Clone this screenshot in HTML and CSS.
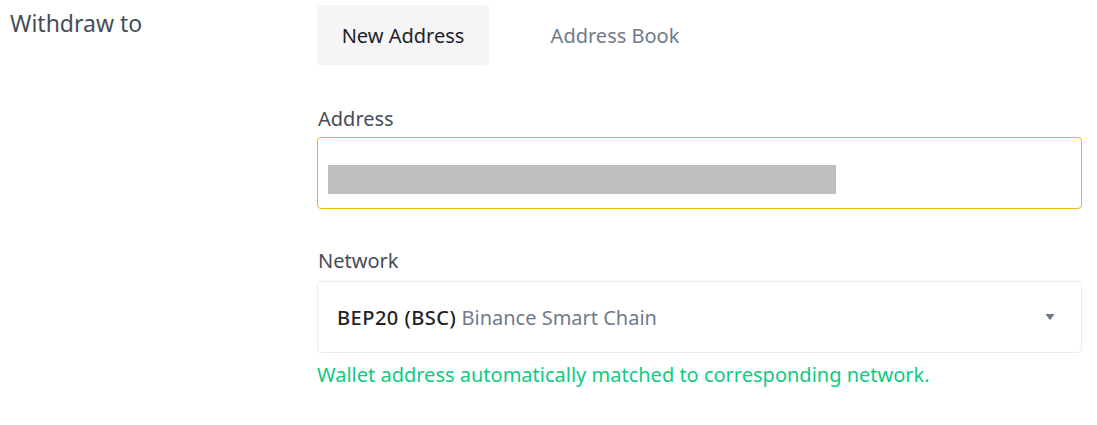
FILE: index.html
```html
<!DOCTYPE html>
<html>
<head>
<meta charset="utf-8">
<link rel="stylesheet" href="styles.css">
</head>
<body>
<div class="row">
  <div class="label-col">Withdraw to</div>
  <div class="content-col">
    <div class="tabs">
      <div class="tab active">New Address</div>
      <div class="tab">Address Book</div>
    </div>
    <div class="field first">
      <div class="field-label">Address</div>
      <div class="input focus">
        <div class="redacted"></div>
      </div>
    </div>
    <div class="field">
      <div class="field-label">Network</div>
      <div class="input select">
        <div class="select-value"><span class="net-code">BEP20 (BSC)</span> <span class="net-name">Binance Smart Chain</span></div>
        <svg class="caret" width="10" height="6" viewBox="0 0 10 6"><path d="M0.5 0H9.5L5.6 5.4Q5 6 4.4 5.4Z" fill="#707a8a"/></svg>
      </div>
      <div class="hint">Wallet address automatically matched to corresponding network.</div>
    </div>
  </div>
</div>
</body>
</html>
```
FILE: styles.css
```css
* { box-sizing: border-box; }
body {
  margin: 0;
  background: #fff;
  font-family: "Noto Sans", "Open Sans", sans-serif;
  font-size: 20px;
  color: #1e2329;
}
.row {
  display: flex;
  padding-top: 5px;
}
.label-col {
  width: 317px;
  padding-left: 10px;
  color: #474d57;
  font-size: 23px;
  line-height: 36px;
}
.content-col {
  width: 765px;
  display: flex;
  flex-direction: column;
}
.tabs {
  display: flex;
}
.tab {
  height: 60px;
  display: flex;
  align-items: center;
  justify-content: center;
  width: 172px;
  border-radius: 4px;
  color: #707a8a;
  margin-right: 40px;
}
.tab.active {
  background: #f5f5f5;
  color: #1e2329;
}
.field {
  margin-top: 38px;
}
.field.first { margin-top: 40px; }
.field-label {
  color: #474d57;
  line-height: 28px;
  margin-bottom: 6px;
  padding-left: 1px;
}
.field.first .field-label { margin-bottom: 4px; }
.input {
  height: 72px;
  border: 1px solid #eaecef;
  border-radius: 4px;
  display: flex;
  align-items: center;
}
.input.focus {
  border-color: #f0b90b;
  padding-left: 10px;
}
.redacted {
  width: 508px;
  height: 29px;
  background: #bfbfbf;
  margin-top: 12px;
}
.select {
  padding: 0 26px 0 19px;
  justify-content: space-between;
}
.net-code { font-weight: 500; color: #1e2329; letter-spacing: 0.5px; }
.net-name { color: #707a8a; }
.hint {
  color: #0ecb81;
  margin-top: 8px;
  line-height: 28px;
}
```
